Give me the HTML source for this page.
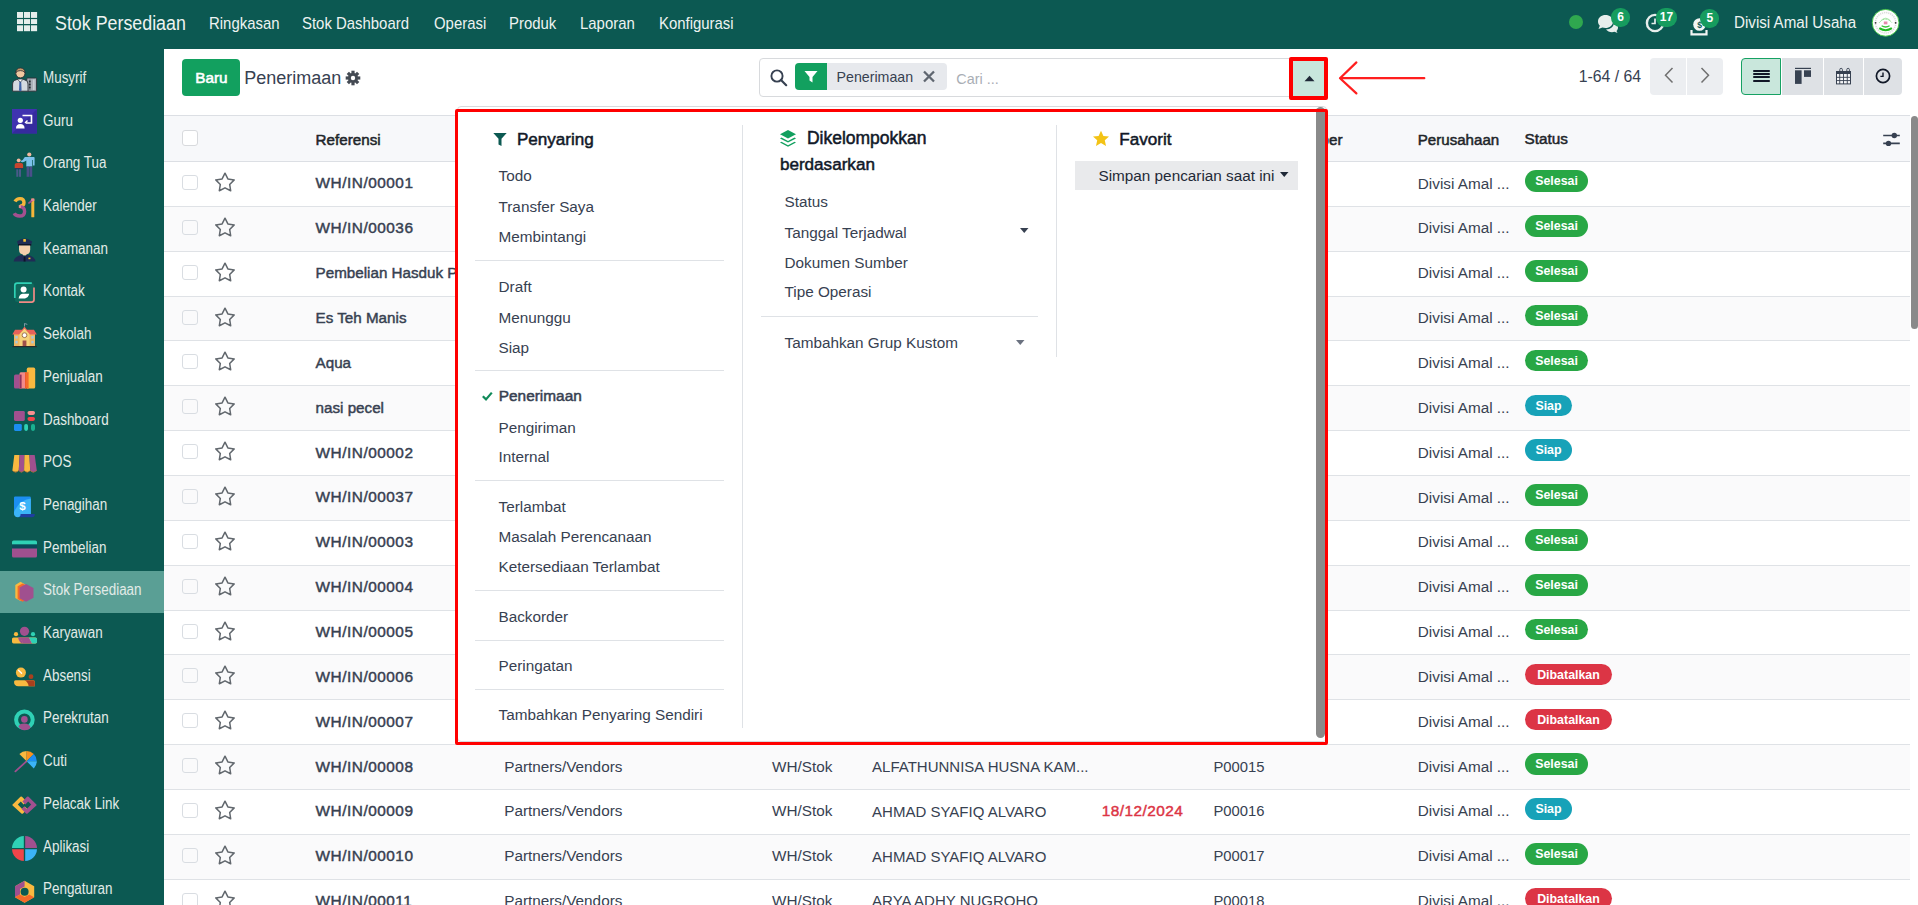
<!DOCTYPE html>
<html><head><meta charset="utf-8">
<style>
*{box-sizing:border-box;margin:0;padding:0}
html,body{width:1918px;height:905px;overflow:hidden;background:#fff;font-family:"Liberation Sans",sans-serif;color:#374151}
.abs{position:absolute}
.t{position:absolute;white-space:nowrap;line-height:1}
.ok{background:#28a745}.info{background:#17a2b8}.bad{background:#dc3545}
svg{overflow:visible}
</style></head><body>
<div class="abs" style="left:0px;top:0px;width:1918px;height:49px;background:#0c5952"></div>
<svg class="abs" style="left:17.3px;top:11.9px;" width="21" height="20" viewBox="0 0 21 20"><rect x="0" y="0" width="6.1" height="5.9" fill="#e6eeec"/><rect x="7" y="0" width="6.1" height="5.9" fill="#e6eeec"/><rect x="14" y="0" width="6.1" height="5.9" fill="#e6eeec"/><rect x="0" y="7.1" width="6.1" height="4.9" fill="#e6eeec"/><rect x="7" y="7.1" width="6.1" height="4.9" fill="#e6eeec"/><rect x="14" y="7.1" width="6.1" height="4.9" fill="#e6eeec"/><rect x="0" y="13.3" width="6.1" height="5.9" fill="#e6eeec"/><rect x="7" y="13.3" width="6.1" height="5.9" fill="#e6eeec"/><rect x="14" y="13.3" width="6.1" height="5.9" fill="#e6eeec"/></svg>
<div class="t" style="left:54.5px;top:13.86px;font-size:19.3px;font-weight:400;color:#eef3f1;transform:scaleX(0.925);transform-origin:0 0;">Stok Persediaan</div>
<div class="t" style="left:208.7px;top:15.02px;font-size:16.4px;font-weight:400;color:#eef3f1;transform:scaleX(0.91);transform-origin:0 0;">Ringkasan</div>
<div class="t" style="left:301.6px;top:15.02px;font-size:16.4px;font-weight:400;color:#eef3f1;transform:scaleX(0.91);transform-origin:0 0;">Stok Dashboard</div>
<div class="t" style="left:434.0px;top:15.02px;font-size:16.4px;font-weight:400;color:#eef3f1;transform:scaleX(0.91);transform-origin:0 0;">Operasi</div>
<div class="t" style="left:509.2px;top:15.02px;font-size:16.4px;font-weight:400;color:#eef3f1;transform:scaleX(0.91);transform-origin:0 0;">Produk</div>
<div class="t" style="left:580.3px;top:15.02px;font-size:16.4px;font-weight:400;color:#eef3f1;transform:scaleX(0.91);transform-origin:0 0;">Laporan</div>
<div class="t" style="left:658.5px;top:15.02px;font-size:16.4px;font-weight:400;color:#eef3f1;transform:scaleX(0.91);transform-origin:0 0;">Konfigurasi</div>
<svg class="abs" style="left:1568px;top:14px;" width="16" height="16" viewBox="0 0 16 16"><circle cx="8" cy="8" r="7" fill="#2fa84f"/></svg>
<svg class="abs" style="left:1595px;top:13px;" width="24" height="20" viewBox="0 0 24 20"><path d="M3 8.5 C3 4.5 6.5 2 10.5 2 C14.5 2 18 4.5 18 8.5 C18 12.5 14.5 15 10.5 15 C9.3 15 8.3 14.8 7.4 14.5 L3.5 16 L4.8 12.8 C3.6 11.6 3 10.2 3 8.5Z" fill="#e8eeec"/><path d="M19 9.5 C21.5 10.5 23 12.3 23 14.5 C23 15.8 22.5 17 21.5 17.9 L22.5 20 L19.5 18.8 C18.7 19 17.9 19.2 17 19.2 C14.5 19.2 12.3 18.2 11 16.6 C15.5 16.3 19 13.5 19 9.5Z" fill="#e8eeec"/></svg>
<div class="abs" style="left:1611.0px;top:8.1px;width:19px;height:19px;border-radius:9px;background:#169c5e;color:#fff;font-size:12px;font-weight:700;line-height:19px;text-align:center">6</div>
<svg class="abs" style="left:1644px;top:12px;" width="22" height="22" viewBox="0 0 22 22"><circle cx="11" cy="11" r="8.1" fill="none" stroke="#e8eeec" stroke-width="2.4"/><path d="M11 6.5 V11.5 H7.5" fill="none" stroke="#e8eeec" stroke-width="1.7"/></svg>
<div class="abs" style="left:1656.0px;top:8.1px;width:21px;height:19px;border-radius:9px;background:#169c5e;color:#fff;font-size:12px;font-weight:700;line-height:19px;text-align:center">17</div>
<svg class="abs" style="left:1689px;top:17px;" width="22" height="20" viewBox="0 0 22 20"><circle cx="10.5" cy="7.5" r="6.3" fill="#f2f5f4"/><text x="10.5" y="10.6" font-size="8.5" font-weight="700" text-anchor="middle" fill="#0c5952" font-family="Liberation Sans">$</text><path d="M2.5 13 L2.5 17.3 L17.5 17.3 L17.5 13" fill="none" stroke="#f2f5f4" stroke-width="2.2"/></svg>
<div class="abs" style="left:1700.3px;top:9.3px;width:19px;height:19px;border-radius:9px;background:#169c5e;color:#fff;font-size:12px;font-weight:700;line-height:19px;text-align:center">5</div>
<div class="t" style="left:1734.0px;top:15.33px;font-size:15.8px;font-weight:400;color:#eef3f1;transform:scaleX(0.96);transform-origin:0 0;">Divisi Amal Usaha</div>
<svg class="abs" style="left:1871px;top:9px;" width="30" height="30" viewBox="0 0 30 30"><circle cx="14.6" cy="13.8" r="13.4" fill="#fdfdfd" stroke="#3cc43c" stroke-width="0.9"/><circle cx="14.6" cy="13.8" r="10.2" fill="none" stroke="#dadada" stroke-width="1.5" stroke-dasharray="1.2 0.9"/><circle cx="14.6" cy="13.8" r="8.2" fill="#fff"/><path d="M8.3 13.6 Q14.6 6.5 20.9 13.6" fill="none" stroke="#58d058" stroke-width="0.9" stroke-dasharray="1 0.6"/><path d="M9.9 11.6 Q14.6 6.8 19.3 11.6" fill="none" stroke="#9be39b" stroke-width="0.7"/><rect x="12.8" y="12.5" width="3.6" height="2.8" fill="#e58aab"/><path d="M10.6 16.8 Q14.6 19.2 18.6 16.8" fill="none" stroke="#36c436" stroke-width="1.3"/><path d="M8.3 19.2 Q14.6 23.2 20.9 19.2" fill="none" stroke="#22bb22" stroke-width="2"/><circle cx="4.6" cy="13.8" r="0.9" fill="#333"/><circle cx="24.6" cy="13.8" r="0.9" fill="#333"/></svg>
<div class="abs" style="left:0px;top:49px;width:164px;height:856px;background:#0c5952"></div>
<div class="t" style="left:43.4px;top:69.93px;font-size:15.8px;font-weight:400;color:#e2ebe8;transform:scaleX(0.85);transform-origin:0 0;">Musyrif</div>
<div class="t" style="left:43.4px;top:112.63px;font-size:15.8px;font-weight:400;color:#e2ebe8;transform:scaleX(0.85);transform-origin:0 0;">Guru</div>
<div class="t" style="left:43.4px;top:155.33px;font-size:15.8px;font-weight:400;color:#e2ebe8;transform:scaleX(0.85);transform-origin:0 0;">Orang Tua</div>
<div class="t" style="left:43.4px;top:198.03px;font-size:15.8px;font-weight:400;color:#e2ebe8;transform:scaleX(0.85);transform-origin:0 0;">Kalender</div>
<div class="t" style="left:43.4px;top:240.73px;font-size:15.8px;font-weight:400;color:#e2ebe8;transform:scaleX(0.85);transform-origin:0 0;">Keamanan</div>
<div class="t" style="left:43.4px;top:283.43px;font-size:15.8px;font-weight:400;color:#e2ebe8;transform:scaleX(0.85);transform-origin:0 0;">Kontak</div>
<div class="t" style="left:43.4px;top:326.13px;font-size:15.8px;font-weight:400;color:#e2ebe8;transform:scaleX(0.85);transform-origin:0 0;">Sekolah</div>
<div class="t" style="left:43.4px;top:368.83px;font-size:15.8px;font-weight:400;color:#e2ebe8;transform:scaleX(0.85);transform-origin:0 0;">Penjualan</div>
<div class="t" style="left:43.4px;top:411.53px;font-size:15.8px;font-weight:400;color:#e2ebe8;transform:scaleX(0.85);transform-origin:0 0;">Dashboard</div>
<div class="t" style="left:43.4px;top:454.23px;font-size:15.8px;font-weight:400;color:#e2ebe8;transform:scaleX(0.85);transform-origin:0 0;">POS</div>
<div class="t" style="left:43.4px;top:496.93px;font-size:15.8px;font-weight:400;color:#e2ebe8;transform:scaleX(0.85);transform-origin:0 0;">Penagihan</div>
<div class="t" style="left:43.4px;top:539.63px;font-size:15.8px;font-weight:400;color:#e2ebe8;transform:scaleX(0.85);transform-origin:0 0;">Pembelian</div>
<div class="abs" style="left:0px;top:570.8px;width:164px;height:42.2px;background:#5a9f95"></div>
<div class="t" style="left:43.4px;top:582.33px;font-size:15.8px;font-weight:400;color:#e2ebe8;transform:scaleX(0.85);transform-origin:0 0;">Stok Persediaan</div>
<div class="t" style="left:43.4px;top:625.03px;font-size:15.8px;font-weight:400;color:#e2ebe8;transform:scaleX(0.85);transform-origin:0 0;">Karyawan</div>
<div class="t" style="left:43.4px;top:667.73px;font-size:15.8px;font-weight:400;color:#e2ebe8;transform:scaleX(0.85);transform-origin:0 0;">Absensi</div>
<div class="t" style="left:43.4px;top:710.43px;font-size:15.8px;font-weight:400;color:#e2ebe8;transform:scaleX(0.85);transform-origin:0 0;">Perekrutan</div>
<div class="t" style="left:43.4px;top:753.13px;font-size:15.8px;font-weight:400;color:#e2ebe8;transform:scaleX(0.85);transform-origin:0 0;">Cuti</div>
<div class="t" style="left:43.4px;top:795.83px;font-size:15.8px;font-weight:400;color:#e2ebe8;transform:scaleX(0.85);transform-origin:0 0;">Pelacak Link</div>
<div class="t" style="left:43.4px;top:838.53px;font-size:15.8px;font-weight:400;color:#e2ebe8;transform:scaleX(0.85);transform-origin:0 0;">Aplikasi</div>
<div class="t" style="left:43.4px;top:881.23px;font-size:15.8px;font-weight:400;color:#e2ebe8;transform:scaleX(0.85);transform-origin:0 0;">Pengaturan</div>
<svg class="abs" style="left:12px;top:66.5px;" width="26" height="26" viewBox="0 0 26 26"><rect x="14.8" y="11" width="9.8" height="13.2" rx="0.8" fill="#aab0b8" stroke="#2b2f36" stroke-width="0.9"/><rect x="16.8" y="12.5" width="2" height="10.5" fill="#7e858e"/><circle cx="17.8" cy="14.5" r="0.9" fill="#2b2f36"/><circle cx="17.8" cy="17.5" r="0.9" fill="#2b2f36"/><circle cx="17.8" cy="20.5" r="0.9" fill="#2b2f36"/><rect x="21" y="12.5" width="1.6" height="10.5" fill="#c9ced4"/><path d="M0.6 24.2 L0.6 17 Q0.6 12.2 8.3 12.2 Q16 12.2 16 17 L16 24.2Z" fill="#d5dae0" stroke="#2b2f36" stroke-width="0.9"/><path d="M7.5 12.5 L9.1 12.5 L9.6 23.5 L8.3 24.2 L7 23.5Z" fill="#3f63a8"/><path d="M5.5 12.4 L8.3 15 L11.1 12.4" fill="#fff" stroke="#2b2f36" stroke-width="0.7"/><circle cx="8.4" cy="6.3" r="4.6" fill="#f0c8a0" stroke="#2b2f36" stroke-width="0.9"/><path d="M3.8 5.6 Q4.2 1 8.4 1 Q12.6 1 13 5.6 Q11 3.4 8.4 3.6 Q5.6 3.4 3.8 5.6Z" fill="#c89a6a" stroke="#2b2f36" stroke-width="0.8"/></svg>
<svg class="abs" style="left:12px;top:109.2px;" width="26" height="26" viewBox="0 0 26 26"><rect x="0" y="0" width="25" height="24.6" fill="#3f33b0"/><path d="M0 24.6 L25 0 L25 24.6Z" fill="#2e2590" opacity=".55"/><path d="M10.5 6.5 H19.5 V14 H14" fill="none" stroke="#fff" stroke-width="1.6"/><path d="M13 14 L15.5 11.5" stroke="#fff" stroke-width="1.4"/><circle cx="8.3" cy="11.3" r="2.6" fill="#fff"/><path d="M4 19.5 Q4 15 8.3 15 Q12.6 15 12.6 19.5Z" fill="#fff"/></svg>
<svg class="abs" style="left:12px;top:151.9px;" width="26" height="26" viewBox="0 0 26 26"><circle cx="17.3" cy="2.5" r="2.1" fill="#f2b8a0"/><path d="M12.8 5 L21.8 5 Q22.6 5 22.6 6 L22.6 13.6 L21 13.6 L21 8 L20.3 8 L20.3 14.6 L14.3 14.6 L14.3 8.5 Q11 11 9 9.8 L8.6 9 Q11 8.6 12.8 5Z" fill="#7cc2ec"/><rect x="14.6" y="14.6" width="2.6" height="10.2" fill="#4a4f8a"/><rect x="17.6" y="14.6" width="2.6" height="10.2" fill="#4a4f8a"/><circle cx="6.7" cy="8.3" r="1.9" fill="#f2b8a0"/><path d="M2.7 13 Q2.7 10.8 6.9 10.8 Q11.1 10.8 11.1 13 L11.1 16.3 L2.7 16.3Z" fill="#c8452e"/><rect x="2.7" y="16.3" width="8.4" height="1" fill="#263066"/><rect x="4.3" y="17.3" width="2" height="7.5" fill="#4a5a8a"/><rect x="7" y="17.3" width="2" height="7.5" fill="#4a5a8a"/></svg>
<svg class="abs" style="left:12px;top:194.6px;" width="26" height="26" viewBox="0 0 26 26"><path d="M3 6.5 Q4.5 3.6 8 3.6 Q12 3.6 12 7.5 Q12 10.8 8 11.3" fill="none" stroke="#f5b63a" stroke-width="3.4"/><path d="M7.5 11.6 Q12.6 11.8 12.6 16.4 Q12.6 21 7.6 21 Q3.5 21 2.2 18.2" fill="none" stroke="#a3508f" stroke-width="3.4"/><path d="M6.8 11.5 L9 11.5" stroke="#e88a8a" stroke-width="2.9"/><rect x="19.3" y="3.5" width="3" height="18.8" rx="0.6" fill="#f5b63a"/><path d="M15.8 8 L20.3 3.8 L21.6 5.6 L17 8.9Z" fill="#a3508f"/><path d="M19.3 3.6 L22.3 3.6 L22.3 6 L19.3 6Z" fill="#e98a9a"/></svg>
<svg class="abs" style="left:12px;top:237.3px;" width="26" height="26" viewBox="0 0 26 26"><path d="M5 4.6 Q12.5 -1.4 20.2 4.6 L19 8.2 L6.2 8.2Z" fill="#1f2c55"/><rect x="6.2" y="7" width="13" height="1.8" fill="#0e1428"/><rect x="11.3" y="2" width="2.6" height="2.8" rx="0.5" fill="#f2c230"/><path d="M7 8.6 L18.2 8.6 L18.2 12.6 Q18.2 17.8 12.6 17.8 Q7 17.8 7 12.6Z" fill="#f5d0ad"/><rect x="10.7" y="16" width="3.8" height="2.4" fill="#f5d0ad"/><path d="M1.6 24.5 Q2 19.3 10.5 17.7 L12.6 20 L14.7 17.7 Q23.2 19.3 23.6 24.5Z" fill="#1f2c55"/><path d="M11.8 19.5 L13.4 19.5 L13.6 24.5 L11.6 24.5Z" fill="#0e1428"/><rect x="16.4" y="20.6" width="2" height="1.6" fill="#f2c230"/></svg>
<svg class="abs" style="left:12px;top:280.0px;" width="26" height="26" viewBox="0 0 26 26"><rect x="2.8" y="3.1" width="19.2" height="19" rx="2.4" fill="#0f6a5d"/><path d="M2.8 18 L2.8 5.5 Q2.8 3.1 5.2 3.1 L19.8 3.1" fill="none" stroke="#2fd1b5" stroke-width="1.7"/><path d="M22 7.5 L22 19.8 Q22 22.1 19.7 22.1 L7 22.1" fill="none" stroke="#f28a85" stroke-width="1.7"/><circle cx="11.6" cy="9.5" r="3" fill="#fff"/><path d="M6.6 18.4 Q7.2 14.6 10.5 13.8 L17.2 13.8 Q16.4 17.8 13 18.4Z" fill="#fff"/></svg>
<svg class="abs" style="left:12px;top:322.7px;" width="26" height="26" viewBox="0 0 26 26"><rect x="0.5" y="23" width="24.3" height="1.2" fill="#2a2a2a"/><rect x="2" y="11" width="21" height="12" fill="#f1b660"/><path d="M0.3 11.5 L3 6.8 L10 6.8 L12.5 3.5 L15 6.8 L22 6.8 L24.8 11.5Z" fill="#e8625a"/><path d="M7.5 11 L12.5 5.6 L17.5 11 L17.5 23 L7.5 23Z" fill="#f6d37a"/><circle cx="12.5" cy="12.2" r="2.4" fill="#fff" stroke="#8a5a3a" stroke-width="0.8"/><rect x="10.6" y="17.5" width="3.8" height="5.5" fill="#a0504a"/><rect x="3.3" y="13" width="2.4" height="2.6" fill="#a9c7d9"/><rect x="3.3" y="17.8" width="2.4" height="2.6" fill="#a9c7d9"/><rect x="19.3" y="13" width="2.4" height="2.6" fill="#a9c7d9"/><rect x="19.3" y="17.8" width="2.4" height="2.6" fill="#a9c7d9"/><path d="M12.5 3.5 L12.5 0.5 L15.3 1.4" fill="none" stroke="#9ab" stroke-width="0.8"/></svg>
<svg class="abs" style="left:12px;top:365.4px;" width="26" height="26" viewBox="0 0 26 26"><path d="M2 11.2 Q2 9.6 3.6 9.6 L9.6 9.6 L9.6 23.5 L3.6 23.5 Q2 23.5 2 22Z" fill="#a0508f"/><path d="M7.6 8.6 Q7.6 7.2 9.2 7.2 L14 7.2 L14 23.5 L7.6 23.5Z" fill="#f28a8a"/><path d="M7.6 9.6 L9.6 9.6 L9.6 23.5 L7.6 23.5Z" fill="#8e3460"/><path d="M13 7.2 L16.6 7.2 L16.6 23.5 L13 23.5Z" fill="#f25a2a"/><path d="M14.8 4.2 Q14.8 2.6 16.4 2.6 L21.6 2.6 Q23.2 2.6 23.2 4.2 L23.2 22 Q23.2 23.5 21.6 23.5 L14.8 23.5Z" fill="#f9b940"/><path d="M14.8 7.2 L16.6 7.2 L16.6 23.5 L14.8 23.5Z" fill="#f56a2a"/></svg>
<svg class="abs" style="left:12px;top:408.1px;" width="26" height="26" viewBox="0 0 26 26"><rect x="2" y="2.9" width="10.8" height="10" rx="1.4" fill="#a0508f"/><rect x="15.5" y="2.9" width="7.5" height="4" rx="1.8" fill="#f59090"/><rect x="15.5" y="8.9" width="7.5" height="4" rx="1.8" fill="#f0454a"/><rect x="2" y="15.9" width="7.8" height="7" rx="1.4" fill="#1b8ef2"/><rect x="12.2" y="15.9" width="3.8" height="7" rx="1.8" fill="#2fd1b5"/><rect x="19" y="15.9" width="4" height="7" rx="1.8" fill="#1ab090"/></svg>
<svg class="abs" style="left:12px;top:450.8px;" width="26" height="26" viewBox="0 0 26 26"><path d="M2.3 3.9 L7.6 3.9 L6.8 19 Q4.2 22.4 0.4 19.6Z" fill="#f9b940"/><path d="M7.6 3.9 L12.5 3.9 L12.1 19.6 Q9.4 22.4 6.8 19.6Z" fill="#a0508f"/><path d="M12.5 3.9 L17.4 3.9 L18.2 19.6 Q15.3 22.4 12.1 19.6Z" fill="#f9b940"/><path d="M17.4 3.9 L22.7 3.9 L24.8 19.6 Q21 22.4 18.2 19.6Z" fill="#a0508f"/><path d="M0.4 19.2 Q3.6 22.8 6.8 19.2 Q9.4 22.8 12.1 19.2 Q15.3 22.8 18.2 19.2 Q21.2 22.8 24.8 19.2 L24.8 19.8 Q21 23.2 18.2 19.8 Q15.3 23.2 12.1 19.8 Q9.4 23.2 6.8 19.8 Q3.6 23.2 0.4 19.8Z" fill="#f57a20"/></svg>
<svg class="abs" style="left:12px;top:493.5px;" width="26" height="26" viewBox="0 0 26 26"><path d="M2 3.6 Q2 2.4 3.2 2.4 L17.6 2.4 Q18.8 2.4 18.8 3.6 L18.8 20 L6 20 Q2 22.8 2 19Z" fill="#1b8ef2"/><path d="M18.8 4.5 Q7 6 2 18 L2 19 Q2 23.3 6 23.3 L18.8 20Z" fill="#3bb4f8"/><path d="M6 23.3 Q8.6 23.3 8.6 20 L22.8 20 Q22.8 23.3 19.8 23.3Z" fill="#1f3ea0"/><text x="10.4" y="15.6" font-family="Liberation Sans" font-weight="700" font-size="11.5" fill="#fff" text-anchor="middle">$</text></svg>
<svg class="abs" style="left:12px;top:536.2px;" width="26" height="26" viewBox="0 0 26 26"><path d="M0 6 Q0 4.4 1.6 4.4 L23.4 4.4 Q25 4.4 25 6 L25 8.6 L0 8.6Z" fill="#2fd1b5"/><rect x="0" y="8.6" width="25" height="4" fill="#0a4a5a"/><path d="M0 12.4 L25 12.4 L25 20 Q25 21.6 23.4 21.6 L1.6 21.6 Q0 21.6 0 20Z" fill="#a0508f"/></svg>
<svg class="abs" style="left:12px;top:578.9px;" width="26" height="26" viewBox="0 0 26 26"><path d="M8.5 2.8 L14.5 6.2 L14.5 18.5 L8.5 22 L3.3 19 L3.3 6Z" fill="#f9b940"/><path d="M10.6 4.4 L16.5 7.6 L16.5 19.6 L10.6 22.7 L5.6 20 L5.6 7.2Z" fill="#f56a2a"/><path d="M14 5 L21.5 9 L21.5 18.8 L14 22.7 L7.6 19.2 L7.6 8.6Z" fill="#a0508f"/></svg>
<svg class="abs" style="left:12px;top:621.6px;" width="26" height="26" viewBox="0 0 26 26"><circle cx="12.5" cy="9.3" r="4.6" fill="#a0508f"/><circle cx="4" cy="12.2" r="2.1" fill="#f9b940"/><circle cx="21" cy="12.2" r="2.1" fill="#2fd1b5"/><path d="M1.6 15.4 L23.4 15.4 Q25 15.4 25 17 L25 19.8 Q25 21.4 23.4 21.4 L1.6 21.4 Q0 21.4 0 19.8 L0 17 Q0 15.4 1.6 15.4Z" fill="#f9b940"/><path d="M8 15.4 L17 15.4 L20 21.4 L11 21.4Z" fill="#a0508f"/><path d="M17 15.4 L23.4 15.4 Q25 15.4 25 17 L25 19.8 Q25 21.4 23.4 21.4 L20 21.4Z" fill="#2fd1b5"/><path d="M6 15.4 L8.5 15.4 L11 21.4 Q7.5 21.4 6 15.4Z" fill="#a0508f"/></svg>
<svg class="abs" style="left:12px;top:664.3px;" width="26" height="26" viewBox="0 0 26 26"><circle cx="8.9" cy="8.6" r="5" fill="#f9b940"/><path d="M6.5 6.2 L9.6 9.2" stroke="#fff" stroke-width="1.3" stroke-linecap="round"/><circle cx="19" cy="12.7" r="2.4" fill="#a8401e"/><path d="M3.6 16.2 L21.2 16.2 Q22.8 16.2 22.8 17.8 L22.8 22.2 L6.4 22.2 Q2 22.2 2 17.8 Q2 16.2 3.6 16.2Z" fill="#f9b940"/><path d="M12.5 16.2 L21.2 16.2 Q22.8 16.2 22.8 17.8 L22.8 22.2 L16.6 22.2 Q16.2 18 12.5 16.2Z" fill="#a8401e"/></svg>
<svg class="abs" style="left:12px;top:707.0px;" width="26" height="26" viewBox="0 0 26 26"><circle cx="12.4" cy="12.8" r="8.3" fill="none" stroke="#2fd1b5" stroke-width="4"/><circle cx="12.4" cy="12.4" r="3.3" fill="#a0508f"/><path d="M6.4 19.6 Q7.4 16.6 12.4 16.6 Q17 16.6 18.6 20.2 Q17.6 23.2 12.4 23.2 Q8.6 23.2 6.4 19.6Z" fill="#a0508f"/></svg>
<svg class="abs" style="left:12px;top:749.7px;" width="26" height="26" viewBox="0 0 26 26"><path d="M14.4 11.4 L3.4 21.4" stroke="#a0508f" stroke-width="1.8" stroke-linecap="round"/><path d="M14.6 11.2 L7.39 3.99 A10.2 10.2 0 0 1 14.60 1.00Z" fill="#f9b940"/><path d="M14.6 11.2 L14.60 1.00 A10.2 10.2 0 0 1 21.81 3.99Z" fill="#f7921e"/><path d="M14.6 11.2 L21.81 3.99 A10.2 10.2 0 0 1 24.80 11.20Z" fill="#1b8ef2"/><path d="M14.6 11.2 L24.80 11.20 A10.2 10.2 0 0 1 21.81 18.41Z" fill="#3bb4f8"/></svg>
<svg class="abs" style="left:12px;top:792.4px;" width="26" height="26" viewBox="0 0 26 26"><path d="M0.6 12.6 L8.4 4.8 Q9.2 4 10 4.8 L14.6 9.4 L11.6 12.4 L8.8 9.6 L5.8 12.6 L10.2 17 L12.8 14.4 L15.4 17 L11 21.4 Q10.2 22.2 9.4 21.4 L0.6 13.6 Q0 13.1 0.6 12.6Z" fill="#f9b940"/><path d="M24.4 12.6 L16.6 4.8 Q15.8 4 15 4.8 L10.4 9.4 L13.4 12.4 L16.2 9.6 L19.2 12.6 L14.8 17 L12.2 14.4 L9.6 17 L14 21.4 Q14.8 22.2 15.6 21.4 L24.4 13.6 Q25 13.1 24.4 12.6Z" fill="#a0508f"/></svg>
<svg class="abs" style="left:12px;top:835.1px;" width="26" height="26" viewBox="0 0 26 26"><path d="M11.8 12.9 L11.8 1.1 A12.5 12.5 0 0 0 0 12.9Z" fill="#2fd1b5"/><path d="M13.2 12.9 L13.2 1.1 A12.5 12.5 0 0 1 25 12.9Z" fill="#a0508f"/><path d="M11.8 14.3 L0 14.3 A12.5 12.5 0 0 0 11.8 26.1Z" fill="#f0454a"/><path d="M13.2 14.3 L25 14.3 A12.5 12.5 0 0 1 13.2 26.1Z" fill="#3bb4f8"/></svg>
<svg class="abs" style="left:12px;top:877.8px;" width="26" height="26" viewBox="0 0 26 26"><path d="M12.6 2.8 L22.2 8.3 L22.2 19.3 L12.6 24.8 L3 19.3 L3 8.3Z" fill="#f9b940"/><path d="M12.6 2.8 L3 8.3 L3 19.3 L8 16.4 L8 11 L12.6 8.5Z" fill="#a0508f"/><path d="M3 19.3 L12.6 24.8 L22.2 19.3 L17.2 16.4 L12.6 19 L8 16.4Z" fill="#f56a2a"/><circle cx="12.6" cy="13.8" r="4" fill="#0c5952"/></svg>
<div class="abs" style="left:164px;top:49px;width:1754px;height:66px;background:#fff"></div>
<div class="abs" style="left:182px;top:59px;width:58px;height:36.5px;border-radius:4px;background:#12a05f"></div>
<div class="t" style="left:195.2px;top:69.85px;font-size:15.3px;font-weight:400;color:#fff;-webkit-text-stroke:0.55px #fff;">Baru</div>
<div class="t" style="left:244.3px;top:69.16px;font-size:18px;font-weight:400;color:#374151;">Penerimaan</div>
<svg class="abs" style="left:345px;top:70.2px;" width="16" height="16" viewBox="0 0 16 16"><g transform="translate(8 8)" fill="#444a53"><circle r="5"/><rect x="-1.6" y="-7.3" width="3.2" height="4" transform="rotate(0)"/><rect x="-1.6" y="-7.3" width="3.2" height="4" transform="rotate(45)"/><rect x="-1.6" y="-7.3" width="3.2" height="4" transform="rotate(90)"/><rect x="-1.6" y="-7.3" width="3.2" height="4" transform="rotate(135)"/><rect x="-1.6" y="-7.3" width="3.2" height="4" transform="rotate(180)"/><rect x="-1.6" y="-7.3" width="3.2" height="4" transform="rotate(225)"/><rect x="-1.6" y="-7.3" width="3.2" height="4" transform="rotate(270)"/><rect x="-1.6" y="-7.3" width="3.2" height="4" transform="rotate(315)"/><circle r="2.2" fill="#fff"/></g></svg>
<div class="abs" style="left:758.5px;top:58.3px;width:566px;height:38.4px;border:1px solid #d8dadd;border-radius:4px;background:#fff"></div>
<svg class="abs" style="left:770px;top:69px;" width="18" height="18" viewBox="0 0 18 18"><circle cx="7" cy="7" r="5.6" fill="none" stroke="#374151" stroke-width="1.9"/><path d="M11 11 L16.2 16.2" stroke="#374151" stroke-width="2.2" stroke-linecap="round"/></svg>
<div class="abs" style="left:795px;top:63.2px;width:32px;height:26.6px;border-radius:4px 0 0 4px;background:#12a05f"></div>
<svg class="abs" style="left:803px;top:69px;" width="16" height="16" viewBox="0 0 16 16"><path d="M1.5 2 L14.5 2 L9.5 8 L9.5 13.5 L6.5 11.5 L6.5 8Z" fill="#fff"/></svg>
<div class="abs" style="left:827px;top:63.2px;width:119.7px;height:26.6px;border-radius:0 4px 4px 0;background:#e7e9ed"></div>
<div class="t" style="left:836.6px;top:69.88px;font-size:14.2px;font-weight:400;color:#374151;">Penerimaan</div>
<svg class="abs" style="left:922px;top:70px;" width="14" height="13" viewBox="0 0 14 13"><path d="M2 1.5 L12 11.5 M12 1.5 L2 11.5" stroke="#5f6670" stroke-width="2.3"/></svg>
<div class="t" style="left:956.3px;top:71.61px;font-size:14.4px;font-weight:400;color:#a9aeb5;">Cari ...</div>
<div class="abs" style="left:1291px;top:59px;width:36px;height:38px;background:#c8e6dc;border-radius:0 4px 4px 0"></div>
<svg class="abs" style="left:1303px;top:74px;" width="13" height="9" viewBox="0 0 13 9"><path d="M1.5 7.3 L6.5 1.7 L11.5 7.3Z" fill="#1f2937"/></svg>
<div class="t" style="left:1578.7px;top:68.93px;font-size:15.8px;font-weight:400;color:#374151;">1-64 / 64</div>
<div class="abs" style="left:1650px;top:58px;width:36px;height:36.7px;background:#eceef1;border-radius:4px 0 0 4px"></div>
<div class="abs" style="left:1687px;top:58px;width:36px;height:36.7px;background:#eceef1;border-radius:0 4px 4px 0"></div>
<svg class="abs" style="left:1662px;top:66px;" width="14" height="19" viewBox="0 0 14 19"><path d="M10.5 2 L3.5 9.3 L10.5 16.6" fill="none" stroke="#707070" stroke-width="1.5"/></svg>
<svg class="abs" style="left:1698px;top:66px;" width="14" height="19" viewBox="0 0 14 19"><path d="M3.5 2 L10.5 9.3 L3.5 16.6" fill="none" stroke="#707070" stroke-width="1.5"/></svg>
<div class="abs" style="left:1741px;top:58px;width:40px;height:36.7px;background:#c9e7dc;border:1.3px solid #16a163;border-radius:4px 0 0 4px"></div>
<div class="abs" style="left:1782px;top:58px;width:41px;height:36.7px;background:#dee1e5"></div>
<div class="abs" style="left:1824px;top:58px;width:39px;height:36.7px;background:#dee1e5"></div>
<div class="abs" style="left:1864px;top:58px;width:38px;height:36.7px;background:#dee1e5;border-radius:0 4px 4px 0"></div>
<svg class="abs" style="left:1752px;top:69px;" width="19" height="15" viewBox="0 0 19 15"><rect x="1.2" y="1" width="16.6" height="2" rx="0.5" fill="#111827"/><rect x="1.2" y="4" width="16.6" height="2" rx="0.5" fill="#111827"/><rect x="1.2" y="7" width="16.6" height="2" rx="0.5" fill="#111827"/><rect x="1.2" y="11" width="16.6" height="2" rx="0.5" fill="#111827"/></svg>
<svg class="abs" style="left:1790px;top:62px;" width="26" height="26" viewBox="0 0 26 26"><rect x="5" y="5.8" width="16" height="1.2" fill="#374151"/><rect x="5" y="8.3" width="6.6" height="13.6" fill="#374151"/><rect x="14" y="8.3" width="7" height="6.6" fill="#374151"/></svg>
<svg class="abs" style="left:1830px;top:62px;" width="26" height="26" viewBox="0 0 26 26"><rect x="6.5" y="9.5" width="14" height="12.4" fill="#f4f5f7" stroke="#374151" stroke-width="1"/><rect x="6" y="9" width="15" height="3" fill="#374151"/><rect x="9.3" y="9" width="0.9" height="13" fill="#374151"/><rect x="13.05" y="9" width="0.9" height="13" fill="#374151"/><rect x="16.8" y="9" width="0.9" height="13" fill="#374151"/><rect x="6" y="14.850000000000001" width="15" height="0.9" fill="#374151"/><rect x="6" y="18.150000000000002" width="15" height="0.9" fill="#374151"/><rect x="9.8" y="6.3" width="2.6" height="4.5" rx="1.3" fill="none" stroke="#374151" stroke-width="0.9"/><rect x="16.8" y="6.3" width="2.6" height="4.5" rx="1.3" fill="none" stroke="#374151" stroke-width="0.9"/></svg>
<svg class="abs" style="left:1870px;top:62px;" width="26" height="26" viewBox="0 0 26 26"><circle cx="13" cy="14" r="6.6" fill="none" stroke="#111827" stroke-width="1.7"/><path d="M13 10.6 V14.4 H10.4" fill="none" stroke="#111827" stroke-width="1.4"/></svg>
<div class="abs" style="left:164px;top:115px;width:1746px;height:46.5px;background:#f7f8fa;border-top:1px solid #dcdfe4;border-bottom:1px solid #dcdfe4"></div>
<div class="abs" style="left:182px;top:130px;width:16px;height:16px;border:1px solid #d8dadd;border-radius:3px;background:#fff"></div>
<div class="t" style="left:315.6px;top:131.53px;font-size:15.2px;font-weight:400;color:#212529;-webkit-text-stroke:0.5px #212529;">Referensi</div>
<div class="t" style="left:1200.0px;top:131.53px;font-size:15.2px;font-weight:400;color:#212529;width:142.5px;text-align:right;-webkit-text-stroke:0.5px #212529;">Dokumen Sumber</div>
<div class="t" style="left:1417.8px;top:131.62px;font-size:15.1px;font-weight:400;color:#212529;-webkit-text-stroke:0.5px #212529;">Perusahaan</div>
<div class="t" style="left:1524.5px;top:131.45px;font-size:15.3px;font-weight:400;color:#212529;-webkit-text-stroke:0.5px #212529;">Status</div>
<svg class="abs" style="left:1882px;top:131px;" width="19" height="17" viewBox="0 0 19 17"><path d="M1.2 4.5 H17.8 M1.2 12.4 H17.8" stroke="#374151" stroke-width="1.6"/><circle cx="12.3" cy="4.5" r="2.7" fill="#374151"/><circle cx="6.5" cy="12.4" r="2.7" fill="#374151"/></svg>
<div class="abs" style="left:164px;top:161.40px;width:1746px;height:44.85px;background:#fff"></div>
<div class="abs" style="left:164px;top:161px;width:1746px;height:1px;background:#dfe2e6"></div>
<div class="abs" style="left:182px;top:175.00px;width:16px;height:15px;border:1px solid #d9dde2;border-radius:3px"></div>
<svg class="abs" style="left:213.5px;top:172.00px;" width="22" height="20" viewBox="0 0 22 20"><path d="M11.00 1.20 L13.88 6.94 L20.23 7.90 L15.66 12.41 L16.70 18.75 L11.00 15.80 L5.30 18.75 L6.34 12.41 L1.77 7.90 L8.12 6.94Z" fill="none" stroke="#62686e" stroke-width="1.5" stroke-linejoin="round"/></svg>
<div class="t" style="left:315.6px;top:175.46px;font-size:15.4px;font-weight:400;color:#374151;letter-spacing:0.5px;-webkit-text-stroke:0.45px #374151;">WH/IN/00001</div>
<div class="t" style="left:1417.8px;top:175.55px;font-size:15.3px;font-weight:400;color:#374151;">Divisi Amal ...</div>
<div class="abs ok" style="left:1525px;top:170.30px;width:63px;height:21.6px;border-radius:11px;color:#fff;font-weight:700;font-size:12.4px;line-height:22px;text-align:center">Selesai</div>
<div class="abs" style="left:164px;top:206.25px;width:1746px;height:44.85px;background:#fafafb"></div>
<div class="abs" style="left:164px;top:206px;width:1746px;height:1px;background:#dfe2e6"></div>
<div class="abs" style="left:182px;top:219.85px;width:16px;height:15px;border:1px solid #d9dde2;border-radius:3px"></div>
<svg class="abs" style="left:213.5px;top:216.85px;" width="22" height="20" viewBox="0 0 22 20"><path d="M11.00 1.20 L13.88 6.94 L20.23 7.90 L15.66 12.41 L16.70 18.75 L11.00 15.80 L5.30 18.75 L6.34 12.41 L1.77 7.90 L8.12 6.94Z" fill="none" stroke="#62686e" stroke-width="1.5" stroke-linejoin="round"/></svg>
<div class="t" style="left:315.6px;top:220.31px;font-size:15.4px;font-weight:400;color:#374151;letter-spacing:0.5px;-webkit-text-stroke:0.45px #374151;">WH/IN/00036</div>
<div class="t" style="left:1417.8px;top:220.40px;font-size:15.3px;font-weight:400;color:#374151;">Divisi Amal ...</div>
<div class="abs ok" style="left:1525px;top:215.15px;width:63px;height:21.6px;border-radius:11px;color:#fff;font-weight:700;font-size:12.4px;line-height:22px;text-align:center">Selesai</div>
<div class="abs" style="left:164px;top:251.10px;width:1746px;height:44.85px;background:#fff"></div>
<div class="abs" style="left:164px;top:251px;width:1746px;height:1px;background:#dfe2e6"></div>
<div class="abs" style="left:182px;top:264.70px;width:16px;height:15px;border:1px solid #d9dde2;border-radius:3px"></div>
<svg class="abs" style="left:213.5px;top:261.70px;" width="22" height="20" viewBox="0 0 22 20"><path d="M11.00 1.20 L13.88 6.94 L20.23 7.90 L15.66 12.41 L16.70 18.75 L11.00 15.80 L5.30 18.75 L6.34 12.41 L1.77 7.90 L8.12 6.94Z" fill="none" stroke="#62686e" stroke-width="1.5" stroke-linejoin="round"/></svg>
<div class="t" style="left:315.6px;top:265.33px;font-size:15.2px;font-weight:400;color:#374151;-webkit-text-stroke:0.45px #374151;">Pembelian Hasduk Pramuka</div>
<div class="t" style="left:1417.8px;top:265.25px;font-size:15.3px;font-weight:400;color:#374151;">Divisi Amal ...</div>
<div class="abs ok" style="left:1525px;top:260.00px;width:63px;height:21.6px;border-radius:11px;color:#fff;font-weight:700;font-size:12.4px;line-height:22px;text-align:center">Selesai</div>
<div class="abs" style="left:164px;top:295.95px;width:1746px;height:44.85px;background:#fafafb"></div>
<div class="abs" style="left:164px;top:296px;width:1746px;height:1px;background:#dfe2e6"></div>
<div class="abs" style="left:182px;top:309.55px;width:16px;height:15px;border:1px solid #d9dde2;border-radius:3px"></div>
<svg class="abs" style="left:213.5px;top:306.55px;" width="22" height="20" viewBox="0 0 22 20"><path d="M11.00 1.20 L13.88 6.94 L20.23 7.90 L15.66 12.41 L16.70 18.75 L11.00 15.80 L5.30 18.75 L6.34 12.41 L1.77 7.90 L8.12 6.94Z" fill="none" stroke="#62686e" stroke-width="1.5" stroke-linejoin="round"/></svg>
<div class="t" style="left:315.6px;top:310.18px;font-size:15.2px;font-weight:400;color:#374151;-webkit-text-stroke:0.45px #374151;">Es Teh Manis</div>
<div class="t" style="left:1417.8px;top:310.10px;font-size:15.3px;font-weight:400;color:#374151;">Divisi Amal ...</div>
<div class="abs ok" style="left:1525px;top:304.85px;width:63px;height:21.6px;border-radius:11px;color:#fff;font-weight:700;font-size:12.4px;line-height:22px;text-align:center">Selesai</div>
<div class="abs" style="left:164px;top:340.80px;width:1746px;height:44.85px;background:#fff"></div>
<div class="abs" style="left:164px;top:340px;width:1746px;height:1px;background:#dfe2e6"></div>
<div class="abs" style="left:182px;top:354.40px;width:16px;height:15px;border:1px solid #d9dde2;border-radius:3px"></div>
<svg class="abs" style="left:213.5px;top:351.40px;" width="22" height="20" viewBox="0 0 22 20"><path d="M11.00 1.20 L13.88 6.94 L20.23 7.90 L15.66 12.41 L16.70 18.75 L11.00 15.80 L5.30 18.75 L6.34 12.41 L1.77 7.90 L8.12 6.94Z" fill="none" stroke="#62686e" stroke-width="1.5" stroke-linejoin="round"/></svg>
<div class="t" style="left:315.6px;top:355.03px;font-size:15.2px;font-weight:400;color:#374151;-webkit-text-stroke:0.45px #374151;">Aqua</div>
<div class="t" style="left:1417.8px;top:354.95px;font-size:15.3px;font-weight:400;color:#374151;">Divisi Amal ...</div>
<div class="abs ok" style="left:1525px;top:349.70px;width:63px;height:21.6px;border-radius:11px;color:#fff;font-weight:700;font-size:12.4px;line-height:22px;text-align:center">Selesai</div>
<div class="abs" style="left:164px;top:385.65px;width:1746px;height:44.85px;background:#fafafb"></div>
<div class="abs" style="left:164px;top:385px;width:1746px;height:1px;background:#dfe2e6"></div>
<div class="abs" style="left:182px;top:399.25px;width:16px;height:15px;border:1px solid #d9dde2;border-radius:3px"></div>
<svg class="abs" style="left:213.5px;top:396.25px;" width="22" height="20" viewBox="0 0 22 20"><path d="M11.00 1.20 L13.88 6.94 L20.23 7.90 L15.66 12.41 L16.70 18.75 L11.00 15.80 L5.30 18.75 L6.34 12.41 L1.77 7.90 L8.12 6.94Z" fill="none" stroke="#62686e" stroke-width="1.5" stroke-linejoin="round"/></svg>
<div class="t" style="left:315.6px;top:399.88px;font-size:15.2px;font-weight:400;color:#374151;-webkit-text-stroke:0.45px #374151;">nasi pecel</div>
<div class="t" style="left:1417.8px;top:399.80px;font-size:15.3px;font-weight:400;color:#374151;">Divisi Amal ...</div>
<div class="abs info" style="left:1525px;top:394.55px;width:47px;height:21.6px;border-radius:11px;color:#fff;font-weight:700;font-size:12.4px;line-height:22px;text-align:center">Siap</div>
<div class="abs" style="left:164px;top:430.50px;width:1746px;height:44.85px;background:#fff"></div>
<div class="abs" style="left:164px;top:430px;width:1746px;height:1px;background:#dfe2e6"></div>
<div class="abs" style="left:182px;top:444.10px;width:16px;height:15px;border:1px solid #d9dde2;border-radius:3px"></div>
<svg class="abs" style="left:213.5px;top:441.10px;" width="22" height="20" viewBox="0 0 22 20"><path d="M11.00 1.20 L13.88 6.94 L20.23 7.90 L15.66 12.41 L16.70 18.75 L11.00 15.80 L5.30 18.75 L6.34 12.41 L1.77 7.90 L8.12 6.94Z" fill="none" stroke="#62686e" stroke-width="1.5" stroke-linejoin="round"/></svg>
<div class="t" style="left:315.6px;top:444.56px;font-size:15.4px;font-weight:400;color:#374151;letter-spacing:0.5px;-webkit-text-stroke:0.45px #374151;">WH/IN/00002</div>
<div class="t" style="left:1417.8px;top:444.65px;font-size:15.3px;font-weight:400;color:#374151;">Divisi Amal ...</div>
<div class="abs info" style="left:1525px;top:439.40px;width:47px;height:21.6px;border-radius:11px;color:#fff;font-weight:700;font-size:12.4px;line-height:22px;text-align:center">Siap</div>
<div class="abs" style="left:164px;top:475.35px;width:1746px;height:44.85px;background:#fafafb"></div>
<div class="abs" style="left:164px;top:475px;width:1746px;height:1px;background:#dfe2e6"></div>
<div class="abs" style="left:182px;top:488.95px;width:16px;height:15px;border:1px solid #d9dde2;border-radius:3px"></div>
<svg class="abs" style="left:213.5px;top:485.95px;" width="22" height="20" viewBox="0 0 22 20"><path d="M11.00 1.20 L13.88 6.94 L20.23 7.90 L15.66 12.41 L16.70 18.75 L11.00 15.80 L5.30 18.75 L6.34 12.41 L1.77 7.90 L8.12 6.94Z" fill="none" stroke="#62686e" stroke-width="1.5" stroke-linejoin="round"/></svg>
<div class="t" style="left:315.6px;top:489.41px;font-size:15.4px;font-weight:400;color:#374151;letter-spacing:0.5px;-webkit-text-stroke:0.45px #374151;">WH/IN/00037</div>
<div class="t" style="left:1417.8px;top:489.50px;font-size:15.3px;font-weight:400;color:#374151;">Divisi Amal ...</div>
<div class="abs ok" style="left:1525px;top:484.25px;width:63px;height:21.6px;border-radius:11px;color:#fff;font-weight:700;font-size:12.4px;line-height:22px;text-align:center">Selesai</div>
<div class="abs" style="left:164px;top:520.20px;width:1746px;height:44.85px;background:#fff"></div>
<div class="abs" style="left:164px;top:520px;width:1746px;height:1px;background:#dfe2e6"></div>
<div class="abs" style="left:182px;top:533.80px;width:16px;height:15px;border:1px solid #d9dde2;border-radius:3px"></div>
<svg class="abs" style="left:213.5px;top:530.80px;" width="22" height="20" viewBox="0 0 22 20"><path d="M11.00 1.20 L13.88 6.94 L20.23 7.90 L15.66 12.41 L16.70 18.75 L11.00 15.80 L5.30 18.75 L6.34 12.41 L1.77 7.90 L8.12 6.94Z" fill="none" stroke="#62686e" stroke-width="1.5" stroke-linejoin="round"/></svg>
<div class="t" style="left:315.6px;top:534.26px;font-size:15.4px;font-weight:400;color:#374151;letter-spacing:0.5px;-webkit-text-stroke:0.45px #374151;">WH/IN/00003</div>
<div class="t" style="left:1417.8px;top:534.35px;font-size:15.3px;font-weight:400;color:#374151;">Divisi Amal ...</div>
<div class="abs ok" style="left:1525px;top:529.10px;width:63px;height:21.6px;border-radius:11px;color:#fff;font-weight:700;font-size:12.4px;line-height:22px;text-align:center">Selesai</div>
<div class="abs" style="left:164px;top:565.05px;width:1746px;height:44.85px;background:#fafafb"></div>
<div class="abs" style="left:164px;top:565px;width:1746px;height:1px;background:#dfe2e6"></div>
<div class="abs" style="left:182px;top:578.65px;width:16px;height:15px;border:1px solid #d9dde2;border-radius:3px"></div>
<svg class="abs" style="left:213.5px;top:575.65px;" width="22" height="20" viewBox="0 0 22 20"><path d="M11.00 1.20 L13.88 6.94 L20.23 7.90 L15.66 12.41 L16.70 18.75 L11.00 15.80 L5.30 18.75 L6.34 12.41 L1.77 7.90 L8.12 6.94Z" fill="none" stroke="#62686e" stroke-width="1.5" stroke-linejoin="round"/></svg>
<div class="t" style="left:315.6px;top:579.11px;font-size:15.4px;font-weight:400;color:#374151;letter-spacing:0.5px;-webkit-text-stroke:0.45px #374151;">WH/IN/00004</div>
<div class="t" style="left:1417.8px;top:579.20px;font-size:15.3px;font-weight:400;color:#374151;">Divisi Amal ...</div>
<div class="abs ok" style="left:1525px;top:573.95px;width:63px;height:21.6px;border-radius:11px;color:#fff;font-weight:700;font-size:12.4px;line-height:22px;text-align:center">Selesai</div>
<div class="abs" style="left:164px;top:609.90px;width:1746px;height:44.85px;background:#fff"></div>
<div class="abs" style="left:164px;top:610px;width:1746px;height:1px;background:#dfe2e6"></div>
<div class="abs" style="left:182px;top:623.50px;width:16px;height:15px;border:1px solid #d9dde2;border-radius:3px"></div>
<svg class="abs" style="left:213.5px;top:620.50px;" width="22" height="20" viewBox="0 0 22 20"><path d="M11.00 1.20 L13.88 6.94 L20.23 7.90 L15.66 12.41 L16.70 18.75 L11.00 15.80 L5.30 18.75 L6.34 12.41 L1.77 7.90 L8.12 6.94Z" fill="none" stroke="#62686e" stroke-width="1.5" stroke-linejoin="round"/></svg>
<div class="t" style="left:315.6px;top:623.96px;font-size:15.4px;font-weight:400;color:#374151;letter-spacing:0.5px;-webkit-text-stroke:0.45px #374151;">WH/IN/00005</div>
<div class="t" style="left:1417.8px;top:624.05px;font-size:15.3px;font-weight:400;color:#374151;">Divisi Amal ...</div>
<div class="abs ok" style="left:1525px;top:618.80px;width:63px;height:21.6px;border-radius:11px;color:#fff;font-weight:700;font-size:12.4px;line-height:22px;text-align:center">Selesai</div>
<div class="abs" style="left:164px;top:654.75px;width:1746px;height:44.85px;background:#fafafb"></div>
<div class="abs" style="left:164px;top:654px;width:1746px;height:1px;background:#dfe2e6"></div>
<div class="abs" style="left:182px;top:668.35px;width:16px;height:15px;border:1px solid #d9dde2;border-radius:3px"></div>
<svg class="abs" style="left:213.5px;top:665.35px;" width="22" height="20" viewBox="0 0 22 20"><path d="M11.00 1.20 L13.88 6.94 L20.23 7.90 L15.66 12.41 L16.70 18.75 L11.00 15.80 L5.30 18.75 L6.34 12.41 L1.77 7.90 L8.12 6.94Z" fill="none" stroke="#62686e" stroke-width="1.5" stroke-linejoin="round"/></svg>
<div class="t" style="left:315.6px;top:668.81px;font-size:15.4px;font-weight:400;color:#374151;letter-spacing:0.5px;-webkit-text-stroke:0.45px #374151;">WH/IN/00006</div>
<div class="t" style="left:1417.8px;top:668.90px;font-size:15.3px;font-weight:400;color:#374151;">Divisi Amal ...</div>
<div class="abs bad" style="left:1525px;top:663.65px;width:87px;height:21.6px;border-radius:11px;color:#fff;font-weight:700;font-size:12.4px;line-height:22px;text-align:center">Dibatalkan</div>
<div class="abs" style="left:164px;top:699.60px;width:1746px;height:44.85px;background:#fff"></div>
<div class="abs" style="left:164px;top:699px;width:1746px;height:1px;background:#dfe2e6"></div>
<div class="abs" style="left:182px;top:713.20px;width:16px;height:15px;border:1px solid #d9dde2;border-radius:3px"></div>
<svg class="abs" style="left:213.5px;top:710.20px;" width="22" height="20" viewBox="0 0 22 20"><path d="M11.00 1.20 L13.88 6.94 L20.23 7.90 L15.66 12.41 L16.70 18.75 L11.00 15.80 L5.30 18.75 L6.34 12.41 L1.77 7.90 L8.12 6.94Z" fill="none" stroke="#62686e" stroke-width="1.5" stroke-linejoin="round"/></svg>
<div class="t" style="left:315.6px;top:713.66px;font-size:15.4px;font-weight:400;color:#374151;letter-spacing:0.5px;-webkit-text-stroke:0.45px #374151;">WH/IN/00007</div>
<div class="t" style="left:1417.8px;top:713.75px;font-size:15.3px;font-weight:400;color:#374151;">Divisi Amal ...</div>
<div class="abs bad" style="left:1525px;top:708.50px;width:87px;height:21.6px;border-radius:11px;color:#fff;font-weight:700;font-size:12.4px;line-height:22px;text-align:center">Dibatalkan</div>
<div class="abs" style="left:164px;top:744.45px;width:1746px;height:44.85px;background:#fafafb"></div>
<div class="abs" style="left:164px;top:744px;width:1746px;height:1px;background:#dfe2e6"></div>
<div class="abs" style="left:182px;top:758.05px;width:16px;height:15px;border:1px solid #d9dde2;border-radius:3px"></div>
<svg class="abs" style="left:213.5px;top:755.05px;" width="22" height="20" viewBox="0 0 22 20"><path d="M11.00 1.20 L13.88 6.94 L20.23 7.90 L15.66 12.41 L16.70 18.75 L11.00 15.80 L5.30 18.75 L6.34 12.41 L1.77 7.90 L8.12 6.94Z" fill="none" stroke="#62686e" stroke-width="1.5" stroke-linejoin="round"/></svg>
<div class="t" style="left:315.6px;top:758.51px;font-size:15.4px;font-weight:400;color:#374151;letter-spacing:0.5px;-webkit-text-stroke:0.45px #374151;">WH/IN/00008</div>
<div class="t" style="left:504.2px;top:758.60px;font-size:15.3px;font-weight:400;color:#374151;">Partners/Vendors</div>
<div class="t" style="left:772.0px;top:758.60px;font-size:15.3px;font-weight:400;color:#374151;">WH/Stok</div>
<div class="t" style="left:872.1px;top:758.85px;font-size:15px;font-weight:400;color:#374151;">ALFATHUNNISA HUSNA KAM...</div>
<div class="t" style="left:1213.5px;top:759.62px;font-size:14.8px;font-weight:400;color:#374151;">P00015</div>
<div class="t" style="left:1417.8px;top:758.60px;font-size:15.3px;font-weight:400;color:#374151;">Divisi Amal ...</div>
<div class="abs ok" style="left:1525px;top:753.35px;width:63px;height:21.6px;border-radius:11px;color:#fff;font-weight:700;font-size:12.4px;line-height:22px;text-align:center">Selesai</div>
<div class="abs" style="left:164px;top:789.30px;width:1746px;height:44.85px;background:#fff"></div>
<div class="abs" style="left:164px;top:789px;width:1746px;height:1px;background:#dfe2e6"></div>
<div class="abs" style="left:182px;top:802.90px;width:16px;height:15px;border:1px solid #d9dde2;border-radius:3px"></div>
<svg class="abs" style="left:213.5px;top:799.90px;" width="22" height="20" viewBox="0 0 22 20"><path d="M11.00 1.20 L13.88 6.94 L20.23 7.90 L15.66 12.41 L16.70 18.75 L11.00 15.80 L5.30 18.75 L6.34 12.41 L1.77 7.90 L8.12 6.94Z" fill="none" stroke="#62686e" stroke-width="1.5" stroke-linejoin="round"/></svg>
<div class="t" style="left:315.6px;top:803.36px;font-size:15.4px;font-weight:400;color:#374151;letter-spacing:0.5px;-webkit-text-stroke:0.45px #374151;">WH/IN/00009</div>
<div class="t" style="left:504.2px;top:803.45px;font-size:15.3px;font-weight:400;color:#374151;">Partners/Vendors</div>
<div class="t" style="left:772.0px;top:803.45px;font-size:15.3px;font-weight:400;color:#374151;">WH/Stok</div>
<div class="t" style="left:872.1px;top:803.70px;font-size:15px;font-weight:400;color:#374151;">AHMAD SYAFIQ ALVARO</div>
<div class="t" style="left:1101.8px;top:803.36px;font-size:15.4px;font-weight:400;color:#dc3545;letter-spacing:0.45px;-webkit-text-stroke:0.45px #dc3545;">18/12/2024</div>
<div class="t" style="left:1213.5px;top:804.47px;font-size:14.8px;font-weight:400;color:#374151;">P00016</div>
<div class="t" style="left:1417.8px;top:803.45px;font-size:15.3px;font-weight:400;color:#374151;">Divisi Amal ...</div>
<div class="abs info" style="left:1525px;top:798.20px;width:47px;height:21.6px;border-radius:11px;color:#fff;font-weight:700;font-size:12.4px;line-height:22px;text-align:center">Siap</div>
<div class="abs" style="left:164px;top:834.15px;width:1746px;height:44.85px;background:#fafafb"></div>
<div class="abs" style="left:164px;top:834px;width:1746px;height:1px;background:#dfe2e6"></div>
<div class="abs" style="left:182px;top:847.75px;width:16px;height:15px;border:1px solid #d9dde2;border-radius:3px"></div>
<svg class="abs" style="left:213.5px;top:844.75px;" width="22" height="20" viewBox="0 0 22 20"><path d="M11.00 1.20 L13.88 6.94 L20.23 7.90 L15.66 12.41 L16.70 18.75 L11.00 15.80 L5.30 18.75 L6.34 12.41 L1.77 7.90 L8.12 6.94Z" fill="none" stroke="#62686e" stroke-width="1.5" stroke-linejoin="round"/></svg>
<div class="t" style="left:315.6px;top:848.21px;font-size:15.4px;font-weight:400;color:#374151;letter-spacing:0.5px;-webkit-text-stroke:0.45px #374151;">WH/IN/00010</div>
<div class="t" style="left:504.2px;top:848.30px;font-size:15.3px;font-weight:400;color:#374151;">Partners/Vendors</div>
<div class="t" style="left:772.0px;top:848.30px;font-size:15.3px;font-weight:400;color:#374151;">WH/Stok</div>
<div class="t" style="left:872.1px;top:848.55px;font-size:15px;font-weight:400;color:#374151;">AHMAD SYAFIQ ALVARO</div>
<div class="t" style="left:1213.5px;top:849.32px;font-size:14.8px;font-weight:400;color:#374151;">P00017</div>
<div class="t" style="left:1417.8px;top:848.30px;font-size:15.3px;font-weight:400;color:#374151;">Divisi Amal ...</div>
<div class="abs ok" style="left:1525px;top:843.05px;width:63px;height:21.6px;border-radius:11px;color:#fff;font-weight:700;font-size:12.4px;line-height:22px;text-align:center">Selesai</div>
<div class="abs" style="left:164px;top:879.00px;width:1746px;height:44.85px;background:#fff"></div>
<div class="abs" style="left:164px;top:879px;width:1746px;height:1px;background:#dfe2e6"></div>
<div class="abs" style="left:164px;top:923px;width:1746px;height:1px;background:#dfe2e6"></div>
<div class="abs" style="left:182px;top:892.60px;width:16px;height:15px;border:1px solid #d9dde2;border-radius:3px"></div>
<svg class="abs" style="left:213.5px;top:889.60px;" width="22" height="20" viewBox="0 0 22 20"><path d="M11.00 1.20 L13.88 6.94 L20.23 7.90 L15.66 12.41 L16.70 18.75 L11.00 15.80 L5.30 18.75 L6.34 12.41 L1.77 7.90 L8.12 6.94Z" fill="none" stroke="#62686e" stroke-width="1.5" stroke-linejoin="round"/></svg>
<div class="t" style="left:315.6px;top:893.06px;font-size:15.4px;font-weight:400;color:#374151;letter-spacing:0.5px;-webkit-text-stroke:0.45px #374151;">WH/IN/00011</div>
<div class="t" style="left:504.2px;top:893.15px;font-size:15.3px;font-weight:400;color:#374151;">Partners/Vendors</div>
<div class="t" style="left:772.0px;top:893.15px;font-size:15.3px;font-weight:400;color:#374151;">WH/Stok</div>
<div class="t" style="left:872.1px;top:893.40px;font-size:15px;font-weight:400;color:#374151;">ARYA ADHY NUGROHO</div>
<div class="t" style="left:1213.5px;top:894.17px;font-size:14.8px;font-weight:400;color:#374151;">P00018</div>
<div class="t" style="left:1417.8px;top:893.15px;font-size:15.3px;font-weight:400;color:#374151;">Divisi Amal ...</div>
<div class="abs bad" style="left:1525px;top:887.90px;width:87px;height:21.6px;border-radius:11px;color:#fff;font-weight:700;font-size:12.4px;line-height:22px;text-align:center">Dibatalkan</div>
<div class="abs" style="left:164px;top:161px;width:1746px;height:1px;background:#dcdfe4"></div>
<div class="abs" style="left:1911px;top:116px;width:7px;height:213px;background:#8a8a8a;border-radius:4px"></div>
<div class="abs" style="left:457px;top:106px;width:870px;height:636px;background:#fff;border:1px solid #d8dadd;border-radius:4px"></div>
<div class="abs" style="left:1316px;top:107px;width:8.5px;height:631px;background:#8a8a8a;border-radius:4.5px"></div>
<svg class="abs" style="left:492px;top:132px;" width="16" height="15" viewBox="0 0 16 15"><path d="M1.3 1 L14.7 1 L9.5 6.8 L9.5 14 L6.5 12.5 L6.5 6.8Z" fill="#0c5952"/></svg>
<div class="t" style="left:516.9px;top:130.72px;font-size:17.1px;font-weight:400;color:#111827;-webkit-text-stroke:0.5px #111827;">Penyaring</div>
<div class="t" style="left:498.5px;top:168.05px;font-size:15.3px;font-weight:400;color:#374151;">Todo</div>
<div class="t" style="left:498.5px;top:198.65px;font-size:15.3px;font-weight:400;color:#374151;">Transfer Saya</div>
<div class="t" style="left:498.5px;top:228.85px;font-size:15.3px;font-weight:400;color:#374151;">Membintangi</div>
<div class="t" style="left:498.5px;top:278.75px;font-size:15.3px;font-weight:400;color:#374151;">Draft</div>
<div class="t" style="left:498.5px;top:309.55px;font-size:15.3px;font-weight:400;color:#374151;">Menunggu</div>
<div class="t" style="left:498.5px;top:339.65px;font-size:15.3px;font-weight:400;color:#374151;">Siap</div>
<div class="t" style="left:498.8px;top:388.46px;font-size:15.4px;font-weight:400;color:#374151;-webkit-text-stroke:0.5px #374151;">Penerimaan</div>
<svg class="abs" style="left:481px;top:390.5px;" width="13" height="11" viewBox="0 0 13 11"><path d="M1.8 5.2 L5 8.4 L10.8 1.6" fill="none" stroke="#118a5a" stroke-width="2.2"/></svg>
<div class="t" style="left:498.5px;top:419.75px;font-size:15.3px;font-weight:400;color:#374151;">Pengiriman</div>
<div class="t" style="left:498.5px;top:449.15px;font-size:15.3px;font-weight:400;color:#374151;">Internal</div>
<div class="t" style="left:498.5px;top:499.15px;font-size:15.3px;font-weight:400;color:#374151;">Terlambat</div>
<div class="t" style="left:498.5px;top:529.25px;font-size:15.3px;font-weight:400;color:#374151;">Masalah Perencanaan</div>
<div class="t" style="left:498.5px;top:559.35px;font-size:15.3px;font-weight:400;color:#374151;">Ketersediaan Terlambat</div>
<div class="t" style="left:498.5px;top:608.95px;font-size:15.3px;font-weight:400;color:#374151;">Backorder</div>
<div class="t" style="left:498.5px;top:658.15px;font-size:15.3px;font-weight:400;color:#374151;">Peringatan</div>
<div class="t" style="left:498.5px;top:706.95px;font-size:15.3px;font-weight:400;color:#374151;">Tambahkan Penyaring Sendiri</div>
<div class="abs" style="left:475px;top:260px;width:249px;height:1px;background:#dfe2e6"></div>
<div class="abs" style="left:475px;top:370px;width:249px;height:1px;background:#dfe2e6"></div>
<div class="abs" style="left:475px;top:480px;width:249px;height:1px;background:#dfe2e6"></div>
<div class="abs" style="left:475px;top:590px;width:249px;height:1px;background:#dfe2e6"></div>
<div class="abs" style="left:475px;top:640px;width:249px;height:1px;background:#dfe2e6"></div>
<div class="abs" style="left:475px;top:689px;width:249px;height:1px;background:#dfe2e6"></div>
<div class="abs" style="left:742px;top:125px;width:1px;height:603px;background:#dfe2e6"></div>
<svg class="abs" style="left:779px;top:129px;" width="18" height="19" viewBox="0 0 18 19"><path d="M9 1 L17 5.2 L9 9.4 L1 5.2Z" fill="#12a05f"/><path d="M2.5 8.6 L9 12 L15.5 8.6 L17 9.4 L9 13.6 L1 9.4Z" fill="#12a05f"/><path d="M2.5 12.8 L9 16.2 L15.5 12.8 L17 13.6 L9 17.8 L1 13.6Z" fill="#12a05f"/></svg>
<div class="t" style="left:806.9px;top:130.39px;font-size:17.5px;font-weight:400;color:#111827;-webkit-text-stroke:0.5px #111827;">Dikelompokkan</div>
<div class="t" style="left:779.9px;top:156.12px;font-size:17.1px;font-weight:400;color:#111827;-webkit-text-stroke:0.5px #111827;">berdasarkan</div>
<div class="t" style="left:784.5px;top:193.55px;font-size:15.3px;font-weight:400;color:#374151;">Status</div>
<div class="t" style="left:784.5px;top:224.75px;font-size:15.3px;font-weight:400;color:#374151;">Tanggal Terjadwal</div>
<div class="t" style="left:784.5px;top:254.55px;font-size:15.3px;font-weight:400;color:#374151;">Dokumen Sumber</div>
<div class="t" style="left:784.5px;top:284.45px;font-size:15.3px;font-weight:400;color:#374151;">Tipe Operasi</div>
<div class="t" style="left:784.5px;top:335.15px;font-size:15.3px;font-weight:400;color:#374151;">Tambahkan Grup Kustom</div>
<svg class="abs" style="left:1019px;top:227px;" width="11" height="7" viewBox="0 0 11 7"><path d="M1 1 L9.5 1 L5.25 6Z" fill="#374151"/></svg>
<svg class="abs" style="left:1015px;top:339px;" width="11" height="7" viewBox="0 0 11 7"><path d="M1 1 L9.5 1 L5.25 6Z" fill="#6b7280"/></svg>
<div class="abs" style="left:761px;top:316px;width:277px;height:1px;background:#dfe2e6"></div>
<div class="abs" style="left:1056px;top:125px;width:1px;height:232px;background:#dfe2e6"></div>
<svg class="abs" style="left:1092px;top:130px;" width="18" height="17" viewBox="0 0 18 17"><path d="M9 0.8 L11.4 6 L17 6.5 L12.8 10.3 L14 15.9 L9 13 L4 15.9 L5.2 10.3 L1 6.5 L6.6 6Z" fill="#f3c316"/></svg>
<div class="t" style="left:1119.2px;top:130.92px;font-size:17.1px;font-weight:400;color:#111827;-webkit-text-stroke:0.5px #111827;">Favorit</div>
<div class="abs" style="left:1075px;top:160.5px;width:223px;height:29.2px;background:#e9eaec"></div>
<div class="t" style="left:1098.5px;top:168.25px;font-size:15.3px;font-weight:400;color:#1f2937;">Simpan pencarian saat ini</div>
<svg class="abs" style="left:1279px;top:171px;" width="11" height="7" viewBox="0 0 11 7"><path d="M1 1 L9.5 1 L5.25 6Z" fill="#1f2937"/></svg>
<div class="abs" style="left:455px;top:109px;width:873px;height:635.5px;border:3.8px solid #ff0000;border-radius:2px"></div>
<div class="abs" style="left:1289px;top:57px;width:39px;height:42.6px;border:4px solid #ff0000;border-radius:2px"></div>
<svg class="abs" style="left:1336px;top:58px;" width="92" height="40" viewBox="0 0 92 40"><path d="M4 20.2 H88.3 M20.4 4.4 L4 20.2 L20.4 35.4" fill="none" stroke="#ff1f1f" stroke-width="2.2" stroke-linecap="round" stroke-linejoin="round"/></svg>
</body></html>
